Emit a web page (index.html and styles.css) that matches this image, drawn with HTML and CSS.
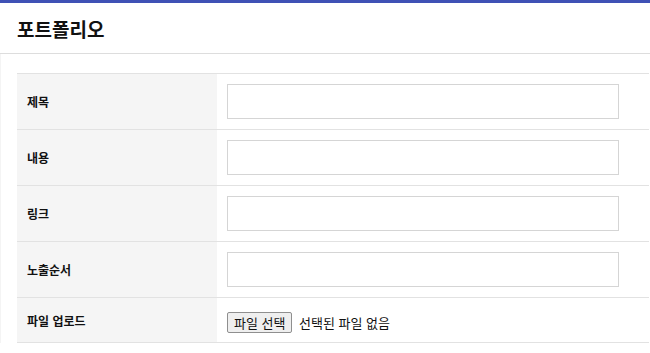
FILE: index.html
```html
<!DOCTYPE html>
<html lang="ko">
<head>
  <meta charset="UTF-8" />
  <meta name="viewport" content="width=device-width, initial-scale=1.0"/>
  <title>포트폴리오</title>
  <link rel="stylesheet" href="styles.css">
</head>
<body>
  <div class="page-header">
    <h2>포트폴리오</h2>
  </div>

  <div class="page-content">
    <table class="form-table">
      <tr>
        <th>제목</th>
        <td><input type="text" name="title" /></td>
      </tr>
      <tr>
        <th>내용</th>
        <td><input type="text" name="content" /></td>
      </tr>
      <tr>
        <th>링크</th>
        <td><input type="text" name="link" /></td>
      </tr>
      <tr>
        <th>노출순서</th>
        <td><input type="text" name="sort" /></td>
      </tr>
      <tr class="file-row">
        <th>파일 업로드</th>
        <td>
          <span class="file-btn">파일 선택</span>
          <span class="file-name">선택된 파일 없음</span>
        </td>
      </tr>
    </table>
  </div>
</body>
</html>
```

FILE: styles.css
```css
body {
  margin: 0;
  padding: 0;
  background-color: #fff;
  font-family: "Noto Sans CJK KR", "Noto Sans", sans-serif;
  color: #111;
}

.page-header {
  border-top: 3px solid #3f51b5;
  border-bottom: 1px solid #ddd;
  height: 50px;
  padding-left: 17px;
  display: flex;
  align-items: center;
}

.page-header h2 {
  margin: 0;
  font-size: 19px;
  font-weight: bold;
  color: #111;
}

.page-content {
  border-left: 1px solid #f4f4f4;
  padding: 19px 1px 0 16px;
}

.form-table {
  width: 100%;
  border-collapse: collapse;
  border-top: 1px solid #e2e2e2;
}

.form-table tr {
  border-bottom: 1px solid #e2e2e2;
}

.form-table th {
  width: 200px;
  height: 56px;
  padding: 0 10px;
  box-sizing: border-box;
  background-color: #f5f5f5;
  text-align: left;
  font-size: 12px;
  font-weight: bold;
}

.form-table td {
  padding: 0 10px;
}

.form-table input[type="text"] {
  display: block;
  width: 392px;
  height: 35px;
  box-sizing: border-box;
  border: 1px solid #d5d5d5;
  padding: 0 8px;
}

.form-table .file-row th {
  height: 45px;
}

.file-btn {
  display: inline-block;
  height: 21px;
  line-height: 19px;
  box-sizing: border-box;
  padding: 0 6px;
  border: 1px solid #8f8f8f;
  border-radius: 2px;
  background-color: #efefef;
  font-size: 13px;
  vertical-align: middle;
}

.file-name {
  font-size: 13px;
  margin-left: 2px;
  vertical-align: middle;
}
```
